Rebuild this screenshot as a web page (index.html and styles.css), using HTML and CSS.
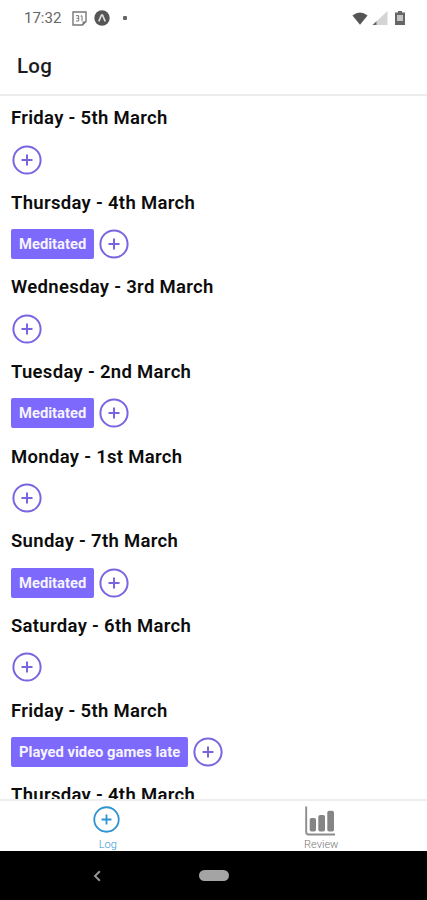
FILE: index.html
```html
<!DOCTYPE html>
<html lang="en">
<head>
<meta charset="utf-8">
<title>Log</title>
<link rel="stylesheet" href="styles.css">
</head>
<body>
<svg width="0" height="0" class="defs">
  <symbol id="plus" viewBox="0 0 30 30">
    <circle cx="15" cy="15" r="13.6" fill="none" stroke="currentColor" stroke-width="2"/>
    <path d="M15 9.5v11M9.5 15h11" fill="none" stroke="currentColor" stroke-width="2"/>
  </symbol>
</svg>
<div class="screen">
  <div class="status">
    <span class="time">17:32</span>
    <svg class="calendar" width="15" height="15" viewBox="0 0 15 15"><path d="M1 1h13v9.5L10.500 14H1z" fill="none" stroke="#777" stroke-width="1.4"/><path d="M10.500 14v-3.500H14z" fill="#777"/><path d="M4 4.700h2.700v5.300H4M4.500 7.300h2.200M8.600 5.200l1.400-.5V10" fill="none" stroke="#777" stroke-width="1"/></svg>
    <svg class="expo" width="16" height="16" viewBox="0 0 16 16"><circle cx="8" cy="8" r="7.700" fill="#555"/><path d="M4.800 11.300L7.500 5h1l2.700 6.300" fill="none" stroke="#ddd" stroke-width="1.700"/></svg>
    <span class="dot"></span>
    <span class="spacer"></span>
    <svg class="wifi" width="16" height="13" viewBox="0 0 16 13"><path d="M.5 3.500Q8-2.500 15.500 3.500L8 12.700z" fill="#555"/></svg>
    <svg class="signal" width="16" height="14" viewBox="0 0 16 14"><path d="M15.500 0v14H.5z" fill="#d4d4d4"/><path d="M4.500 10.300V14H.5z" fill="#666"/></svg>
    <svg class="battery" width="10" height="14" viewBox="0 0 10 14"><path d="M3 0h4v1.500h3V14H0V1.500h3z" fill="#666"/><path d="M2 4h6v6H2z" fill="#c4c4c4"/></svg>
  </div>
  <header class="header"><h1>Log</h1></header>
  <main class="list">
    <section class="day"><h2>Friday - 5th March</h2><div class="row"><svg class="add"><use href="#plus"/></svg></div></section>
    <section class="day"><h2>Thursday - 4th March</h2><div class="row"><span class="tag">Meditated</span><svg class="add"><use href="#plus"/></svg></div></section>
    <section class="day"><h2>Wednesday - 3rd March</h2><div class="row"><svg class="add"><use href="#plus"/></svg></div></section>
    <section class="day"><h2>Tuesday - 2nd March</h2><div class="row"><span class="tag">Meditated</span><svg class="add"><use href="#plus"/></svg></div></section>
    <section class="day"><h2>Monday - 1st March</h2><div class="row"><svg class="add"><use href="#plus"/></svg></div></section>
    <section class="day"><h2>Sunday - 7th March</h2><div class="row"><span class="tag">Meditated</span><svg class="add"><use href="#plus"/></svg></div></section>
    <section class="day"><h2>Saturday - 6th March</h2><div class="row"><svg class="add"><use href="#plus"/></svg></div></section>
    <section class="day"><h2>Friday - 5th March</h2><div class="row"><span class="tag">Played video games late</span><svg class="add"><use href="#plus"/></svg></div></section>
    <section class="day"><h2>Thursday - 4th March</h2></section>
  </main>
  <nav class="tabs">
    <div class="tab active"><svg class="tab-add"><use href="#plus"/></svg><span>Log</span></div>
    <div class="tab"><svg class="chart" width="30" height="30" viewBox="0 0 30 30"><path d="M1.200 .5v25.500q0 2.500 2.500 2.500H30" fill="none" stroke="#8c8c8c" stroke-width="1.900"/><g fill="#858585"><rect x="4.700" y="12" width="6.300" height="13.500" rx="1.800"/><rect x="13.300" y="9" width="6.700" height="16.500" rx="1.800"/><rect x="22.300" y="4.700" width="6.700" height="20.800" rx="1.800"/></g></svg><span>Review</span></div>
  </nav>
  <div class="system">
    <svg class="back" width="8" height="12" viewBox="0 0 8 12"><path d="M6.800 1.300L2 6l4.800 4.700" fill="none" stroke="#999" stroke-width="1.900"/></svg>
    <span class="home"></span>
    <span></span>
  </div>
</div>
</body>
</html>
```
FILE: styles.css
```css
* { box-sizing: border-box; }
body { margin: 0; background: #fff; font-family: Roboto, sans-serif; }
.defs { display: block; }
.screen { width: 427px; height: 900px; display: flex; flex-direction: column; overflow: hidden; }
.status { height: 36px; flex: none; display: flex; align-items: center; padding: 0 22px 0 24px; }
.time { font-size: 15px; color: #666; width: 48px; }
.expo { margin-left: 7px; }
.dot { width: 4px; height: 4px; border-radius: 1px; background: #666; margin-left: 13px; }
.spacer { flex: 1; }
.signal { margin-left: 4px; }
.battery { margin-left: 7px; }
.header { height: 60px; flex: none; border-bottom: 2px solid #ececec; padding: 2px 0 0 17px; display: flex; align-items: center; }
h1 { margin: 0; font-size: 20.5px; font-weight: 500; letter-spacing: 0.3px; color: #1c1c1e; }
.list { height: 703px; flex: none; overflow: hidden; padding-left: 11px; }
.day { height: 84.67px; }
h2 { margin: 0; padding-top: 1px; font-size: 18.5px; line-height: 42px; font-weight: 600; letter-spacing: 0.31px; color: #0c0c0c; white-space: nowrap; }
.row { height: 41px; display: flex; align-items: center; }
.tag { height: 30px; margin-right: 4px; padding: 0 8px; border-radius: 2px; background: #7d69fb; color: #f6f4ff; font-size: 14.75px; line-height: 30px; font-weight: 700; white-space: nowrap; }
.add { width: 30px; height: 30px; margin-left: 1px; color: #7865e2; }
.tag + .add { margin-left: 0.8px; }
.tabs { height: 52px; flex: none; display: flex; border-top: 2px solid #eee; }
.tab { flex: 1; display: flex; flex-direction: column; align-items: center; font-size: 11px; line-height: 10px; font-weight: 300; color: #777; }
.tab.active { color: #2e93d1; }
.tab-add { width: 27px; height: 27px; margin: 5px 0 3px; }
.tab span { margin: 4px 0 0 2px; }
.chart { margin: 5px 0 0; }
.system { height: 49px; flex: none; background: #000; display: grid; grid-template-columns: 1fr 30px 1fr; align-items: center; }
.back { margin-left: 93px; }
.home { height: 11px; border-radius: 6px; background: #a4a4a4; }
```
